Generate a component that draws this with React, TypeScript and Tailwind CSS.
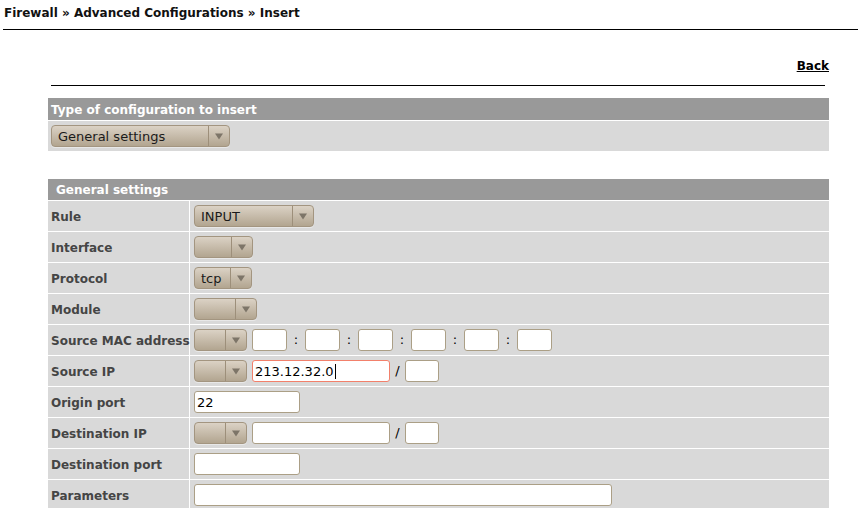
import React from "react";

function Select({ w, text }: { w: number; text?: string }) {
  return (
    <div
      className="flex h-[22px] items-stretch rounded-[4px] border border-[#a39580] bg-gradient-to-b from-[#dbd2c5] to-[#b2a590] text-[13px] leading-none text-[#1a1a1a] shadow-[0_1px_0_rgba(255,255,255,0.4)]"
      style={{ width: w }}
    >
      <div className="flex flex-1 items-center overflow-hidden whitespace-nowrap pl-[6px]">{text}</div>
      <div className="flex w-[21px] items-center justify-center border-l border-[#9d8f7a]">
        <svg width="8" height="7" viewBox="0 0 8 7">
          <path d="M0 0.5 L8 0.5 L4 6.5 Z" fill="#7d7568" />
        </svg>
      </div>
    </div>
  );
}

function Input({ w, value, focus }: { w: number; value?: string; focus?: boolean }) {
  return (
    <div
      className={
        "flex h-[22px] items-center rounded-[3px] border bg-white pl-[2px] text-[13px] leading-none text-black " +
        (focus ? "border-[#f2806b]" : "border-[#ab9f86]")
      }
      style={{ width: w }}
    >
      {value}
      {focus && <span className="ml-px inline-block h-[15px] w-px bg-black" />}
    </div>
  );
}

function Row({ label, children }: { label: string; children?: React.ReactNode }) {
  return (
    <div className="flex h-[30px] gap-px">
      <div className="flex w-[141px] items-center whitespace-nowrap bg-[#d9d9d9] pl-[3px] pt-px text-[12px] font-bold text-[#454545]">
        {label}
      </div>
      <div className="flex flex-1 items-center bg-[#d9d9d9] pl-[4px]">{children}</div>
    </div>
  );
}

function Sep({ c, w }: { c: string; w: number }) {
  return (
    <span className="text-center text-[13px] text-black" style={{ width: w }}>
      {c}
    </span>
  );
}

export default function App() {
  return (
    <div className="relative h-[508px] w-[858px] overflow-hidden bg-white" style={{ fontFamily: '"DejaVu Sans", Verdana, sans-serif' }}>
      <div className="pl-[4px] pt-[6px] text-[12px] font-bold leading-[15px] text-[#111]">
        Firewall » Advanced Configurations » Insert
      </div>
      <div className="ml-[3px] mt-[8px] h-px bg-black" />
      <div className="ml-[48px] w-[781px]">
        <div className="mt-[29px] text-right text-[12px] font-bold leading-[15px] text-black underline">Back</div>
        <div className="ml-[3px] mr-[4px] mt-[11px] h-px bg-black" />
        <div className="mt-[12px] flex flex-col gap-px">
          <div className="flex h-[22px] items-center bg-[#999999] pl-[3px] pt-px text-[12px] font-bold text-white">
            Type of configuration to insert
          </div>
          <div className="flex h-[30px] items-center bg-[#d9d9d9] pl-[3px]">
            <Select w={179} text="General settings" />
          </div>
        </div>
        <div className="mt-[28px] flex flex-col gap-px">
          <div className="flex h-[21px] items-center bg-[#999999] pl-[8px] pt-px text-[12px] font-bold text-white">
            General settings
          </div>
          <Row label="Rule">
            <Select w={120} text="INPUT" />
          </Row>
          <Row label="Interface">
            <Select w={59} />
          </Row>
          <Row label="Protocol">
            <Select w={58} text="tcp" />
          </Row>
          <Row label="Module">
            <Select w={63} />
          </Row>
          <Row label="Source MAC address">
            <Select w={53} />
            <div className="w-[5px]" />
            <Input w={35} />
            <Sep c=":" w={18} />
            <Input w={35} />
            <Sep c=":" w={18} />
            <Input w={35} />
            <Sep c=":" w={18} />
            <Input w={35} />
            <Sep c=":" w={18} />
            <Input w={35} />
            <Sep c=":" w={18} />
            <Input w={35} />
          </Row>
          <Row label="Source IP">
            <Select w={53} />
            <div className="w-[5px]" />
            <Input w={138} value="213.12.32.0" focus />
            <Sep c="/" w={15} />
            <Input w={34} />
          </Row>
          <Row label="Origin port">
            <Input w={106} value="22" />
          </Row>
          <Row label="Destination IP">
            <Select w={53} />
            <div className="w-[5px]" />
            <Input w={138} />
            <Sep c="/" w={15} />
            <Input w={34} />
          </Row>
          <Row label="Destination port">
            <Input w={106} />
          </Row>
          <Row label="Parameters">
            <Input w={418} />
          </Row>
        </div>
      </div>
    </div>
  );
}
